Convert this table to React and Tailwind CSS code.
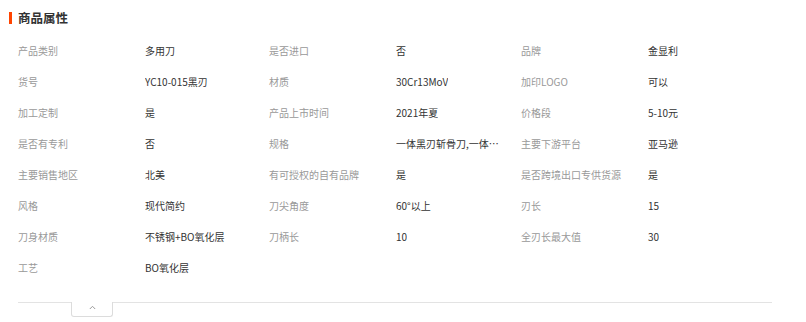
import React from "react";

const attrs = [
  ["产品类别", "多用刀"],
  ["是否进口", "否"],
  ["品牌", "金显利"],
  ["货号", "YC10-015黑刃"],
  ["材质", "30Cr13MoV"],
  ["加印LOGO", "可以"],
  ["加工定制", "是"],
  ["产品上市时间", "2021年夏"],
  ["价格段", "5-10元"],
  ["是否有专利", "否"],
  ["规格", "一体黑刃斩骨刀,一体黑刃切片刀,一体黑刃厨师刀"],
  ["主要下游平台", "亚马逊"],
  ["主要销售地区", "北美"],
  ["有可授权的自有品牌", "是"],
  ["是否跨境出口专供货源", "是"],
  ["风格", "现代简约"],
  ["刀尖角度", "60°以上"],
  ["刃长", "15"],
  ["刀身材质", "不锈钢+BO氧化层"],
  ["刀柄长", "10"],
  ["全刃长最大值", "30"],
  ["工艺", "BO氧化层"],
];

const App = () => {
  return (
    <div
      className="w-[806px] h-[322px] bg-white overflow-hidden"
      style={{ fontFamily: '"Noto Sans CJK SC", "Noto Sans", sans-serif' }}
    >
      {/* title */}
      <div className="flex items-center h-[35px] pl-[9px] pt-[1px]">
        <span className="w-[3px] h-[12px] bg-[#ff4400]" />
        <h2 className="ml-[6px] text-[12.5px] font-bold text-[#333]">商品属性</h2>
      </div>

      <div className="px-[18px]">
        <div className="grid grid-cols-[127px_124px_127px_125px_127px_126px] text-[10px] leading-[15px]">
          {attrs.map(([label, value]) => (
            <React.Fragment key={label}>
              <div className="h-[31px] flex items-center text-[#999] whitespace-nowrap">
                {label}
              </div>
              <div className="h-[31px] flex items-center text-[#333] pr-[18px] min-w-0">
                <span className="truncate">{value}</span>
              </div>
            </React.Fragment>
          ))}
        </div>

        {/* collapse bar */}
        <div className="relative mt-[19px] w-[754px] border-t border-[#e3e3e3]">
          <button className="absolute left-[53px] top-[-1px] w-[42px] h-[15px] bg-white border border-t-0 border-[#dcdcdc] rounded-b-[3px] flex items-center justify-center">
            <svg width="7" height="5" viewBox="0 0 7 5" className="mb-[3px]">
              <path d="M0.8 4 L3.5 1.3 L6.2 4" fill="none" stroke="#999" strokeWidth="1" />
            </svg>
          </button>
        </div>
      </div>
    </div>
  );
};

export default App;
